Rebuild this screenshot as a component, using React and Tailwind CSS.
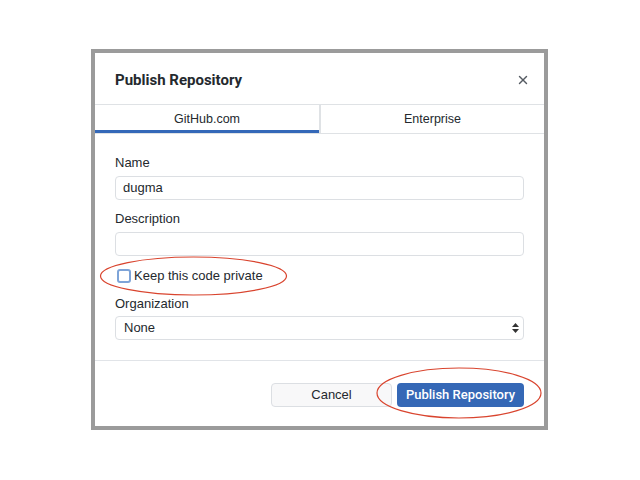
import { X } from "lucide-react";

const font = { fontFamily: '"Liberation Sans", Arial, sans-serif' };
const roboto = { fontFamily: 'Roboto, "Liberation Sans", sans-serif' };

function Field({ label, children, className = "" }) {
  return (
    <div className={className}>
      <div className="text-[13px] leading-4 text-[#24292e]">{label}</div>
      {children}
    </div>
  );
}

export default function App() {
  return (
    <div className="relative w-[640px] h-[480px] bg-white overflow-hidden" style={font}>
      <div className="ml-[91px] pt-[49px]">
        <div className="w-[457px] h-[381px] border-4 border-[#9b9b9b] bg-white flex flex-col">
          {/* header */}
          <div className="h-[51px] flex items-center justify-between pl-[20px] pr-[14px] pt-[3px]">
            <h1 className="text-[15px] font-bold text-[#24292e]" style={roboto}>Publish Repository</h1>
            <X className="w-[14px] h-[14px] text-[#555b62]" strokeWidth={2.5} />
          </div>

          {/* tabs */}
          <div className="flex h-[30px] border-y border-[#dfe2e5] text-[12.5px] text-[#24292e]">
            <div className="w-[224px] flex items-center justify-center border-b-[3px] border-[#3468b8] pt-[3px]">GitHub.com</div>
            <div className="flex-1 flex items-center justify-center border-l-2 border-[#dfe2e5]">Enterprise</div>
          </div>

          {/* body */}
          <div className="px-[20px] pt-[21px] pb-[20px] border-b border-[#e1e4e8]">
            <Field label="Name">
              <div className="mt-[5px] h-[24px] rounded border border-[#dcdfe3] flex items-center px-[7px] text-[13px] text-[#24292e]">dugma</div>
            </Field>
            <Field label="Description" className="mt-[11px]">
              <div className="mt-[5px] h-[24px] rounded border border-[#dcdfe3]" />
            </Field>
            <label className="mt-[12px] flex items-center h-4 text-[13px] text-[#24292e]">
              <span className="ml-[2px] mr-[3px] w-[14px] h-[14px] rounded-[3px] border-2 border-[#7ea4d8] bg-white" />
              Keep this code private
            </label>
            <Field label="Organization" className="mt-[12px]">
              <div className="mt-[4px] h-[24px] rounded border border-[#dcdfe3] flex items-center justify-between pl-[8px] pr-[3px] text-[13px] text-[#24292e]">
                None
                <svg width="9" height="12" viewBox="0 0 9 12">
                  <path d="M4.5 1 L8 5 L1 5 Z" fill="#333" />
                  <path d="M4.5 11 L8 7 L1 7 Z" fill="#333" />
                </svg>
              </div>
            </Field>
          </div>

          {/* footer */}
          <div className="flex-1 flex items-center justify-end gap-[5px] px-[20px] pt-[2px]">
            <button className="w-[121px] h-[24px] rounded border border-[#dcdfe3] bg-[#f8f8f9] text-[13px] text-[#24292e]">Cancel</button>
            <button className="w-[127px] h-[24px] rounded bg-[#3568b6] text-[13px] font-medium text-white" style={roboto}>Publish Repository</button>
          </div>
        </div>
      </div>

      {/* annotation ellipses */}
      <svg className="absolute left-0 top-0 pointer-events-none" width="640" height="480">
        <ellipse cx="193.5" cy="276" rx="93" ry="19" fill="none" stroke="#d9442e" strokeWidth="1.2" />
        <ellipse cx="459" cy="393" rx="82" ry="25" fill="none" stroke="#d9442e" strokeWidth="1.2" />
      </svg>
    </div>
  );
}
